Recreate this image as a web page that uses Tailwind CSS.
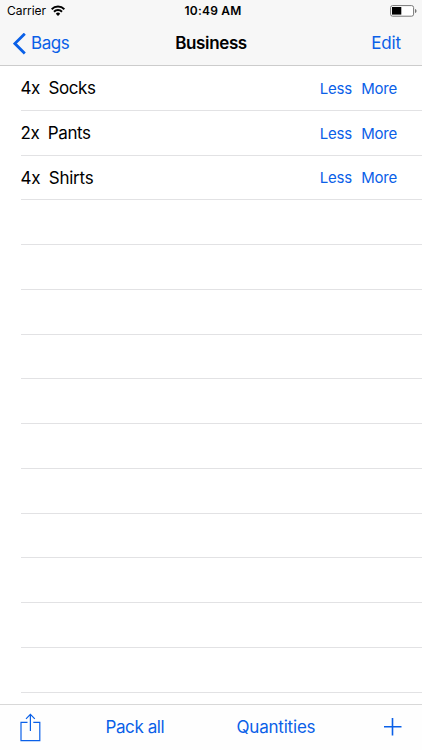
<!DOCTYPE html>
<html lang="en">
<head>
  <meta charset="utf-8">
  <meta name="viewport" content="width=device-width, initial-scale=1">
  <title>Business</title>
  <script src="https://cdn.jsdelivr.net/npm/@tailwindcss/browser@4"></script>
</head>
<body class="bg-white text-black font-['Inter','Liberation_Sans',sans-serif]">
  <main class="w-[422px] h-[750px] flex flex-col overflow-hidden">
    <header class="h-[66px] shrink-0 bg-[#f7f7f7] border-b border-[#cccccc]">
      <!-- Status bar -->
      <div class="h-[22px] grid grid-cols-3 items-center pl-[7px] pr-[5px] text-xs leading-[22px]">
        <div class="flex items-center gap-[5px]">
          <span class="tracking-[-0.05px]">Carrier</span>
          <svg class="w-[14px] h-[11px] mb-px" viewBox="0 0 14 11" fill="none" stroke="#000" stroke-width="2">
            <path d="M0.600 4.200a9 9 0 0 1 12.800 0"/>
            <path d="M3 6.800a5.600 5.600 0 0 1 8 0"/>
            <path d="M7 10.900L4.800 8.700a3.100 3.100 0 0 1 4.400 0z" fill="#000" stroke="none"/>
          </svg>
        </div>
        <span class="text-center font-semibold tracking-[0.2px] pl-[2px]">10:49 AM</span>
        <svg class="justify-self-end w-[27px] h-[12px]" viewBox="0 0 27 12">
          <rect x="0.6" y="0.6" width="23" height="10.6" rx="2" fill="#fff" stroke="#777" stroke-width="1"/>
          <rect x="2" y="2" width="9.3" height="7.6" fill="#000"/>
          <path d="M25 4v4c1-.3 1.5-1 1.5-2s-.5-1.700-1.500-2z" fill="#777"/>
        </svg>
      </div>
      <!-- Navigation bar -->
      <nav class="h-[43px] grid grid-cols-3 items-center pl-[13px] pr-[21px] text-[17px]">
        <a class="flex items-center gap-[5px] text-[#0a60e8]">
          <svg class="w-[13px] h-[22px]" viewBox="0 0 13 22" fill="none" stroke="currentColor" stroke-width="2.800"><path d="M11.800 .7L1.900 10.600l9.900 9.900"/></svg>
          <span class="tracking-[-0.45px]">Bags</span>
        </a>
        <h1 class="text-center font-semibold tracking-[-0.35px] pl-[8px]">Business</h1>
        <a class="text-right text-[#0a60e8] tracking-[-0.15px]">Edit</a>
      </nav>
    </header>

    <section class="flex-1 min-h-0 overflow-hidden pl-[20.500px]">
      <div class="h-[44.77px] pt-[2.5px] flex items-center justify-between border-b border-[#e2e2e4] pr-[25px]">
        <div class="flex gap-[8.5px] text-[17px] tracking-[-0.4px]"><span>4x</span><span>Socks</span></div>
        <div class="flex gap-[9.5px] text-[15px] tracking-[-0.25px] text-[#0a60e8]"><a>Less</a><a>More</a></div>
      </div>
      <div class="h-[44.77px] pt-[2.5px] flex items-center justify-between border-b border-[#e2e2e4] pr-[25px]">
        <div class="flex gap-[8.5px] text-[17px] tracking-[-0.4px]"><span>2x</span><span>Pants</span></div>
        <div class="flex gap-[9.5px] text-[15px] tracking-[-0.25px] text-[#0a60e8]"><a>Less</a><a>More</a></div>
      </div>
      <div class="h-[44.77px] pt-[2.5px] flex items-center justify-between border-b border-[#e2e2e4] pr-[25px]">
        <div class="flex gap-[8.5px] text-[17px] tracking-[-0.25px]"><span>4x</span><span>Shirts</span></div>
        <div class="flex gap-[9.5px] text-[15px] tracking-[-0.25px] text-[#0a60e8]"><a>Less</a><a>More</a></div>
      </div>
      <div class="h-[44.77px] border-b border-[#e2e2e4]"></div>
      <div class="h-[44.77px] border-b border-[#e2e2e4]"></div>
      <div class="h-[44.77px] border-b border-[#e2e2e4]"></div>
      <div class="h-[44.77px] border-b border-[#e2e2e4]"></div>
      <div class="h-[44.77px] border-b border-[#e2e2e4]"></div>
      <div class="h-[44.77px] border-b border-[#e2e2e4]"></div>
      <div class="h-[44.77px] border-b border-[#e2e2e4]"></div>
      <div class="h-[44.77px] border-b border-[#e2e2e4]"></div>
      <div class="h-[44.77px] border-b border-[#e2e2e4]"></div>
      <div class="h-[44.77px] border-b border-[#e2e2e4]"></div>
      <div class="h-[44.77px] border-b border-[#e2e2e4]"></div>
    </section>

    <!-- Toolbar -->
    <footer class="h-[46px] shrink-0 flex items-center border-t border-[#d8d8d8] bg-[#fefefe] px-5 text-[17px] text-[#0a60e8]">
      <svg class="w-[21px] h-[29px]" viewBox="0 0 21 29" fill="none" stroke="currentColor" stroke-width="1.200">
        <path d="M7.500 9.400H1v18.200h18.800V9.400h-6.500M10.400 18V1.500M6 5.800l4.400-4.400 4.400 4.400"/>
      </svg>
      <span class="ml-[64.500px] w-[131px] tracking-[-0.4px]">Pack all</span>
      <span class="tracking-[-0.2px]">Quantities</span>
      <svg class="ml-auto w-[18px] h-[18px] mb-[2px]" viewBox="0 0 18 18" stroke="currentColor" stroke-width="1.600"><path d="M8.500 0v17.500M0 8.800h17.500"/></svg>
    </footer>
  </main>
</body>
</html>
